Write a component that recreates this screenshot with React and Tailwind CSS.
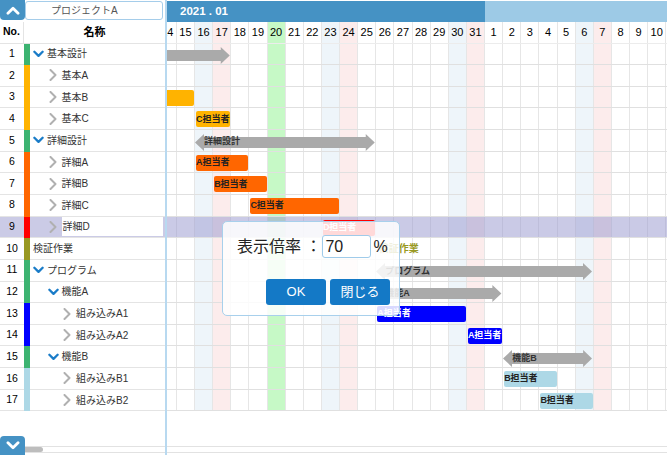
import React from "react";

const W = 18.125;
const days = [...Array(18)].map((_, i) => 14 + i).concat([...Array(10)].map((_, i) => i + 1));

const cellBg = (i) => {
  if (i === 6) return "bg-[#c6f9c6]";
  if (i % 7 === 2) return "bg-[#eef5fa]";
  if (i % 7 === 3) return "bg-[#fcecec]";
  return "";
};

const GREEN = "bg-[#3cb371]";
const YELLOW = "bg-[#ffb300]";
const ORANGE = "bg-[#ff6600]";
const BLUE = "bg-[#0000ff]";
const LIGHT = "bg-[#add8e6]";

const rows = [
  { no: 1, name: "基本設計", strip: GREEN, level: 0, open: true, arrow: { s: -6, e: 4 } },
  { no: 2, name: "基本A", strip: YELLOW, level: 1 },
  { no: 3, name: "基本B", strip: YELLOW, level: 1, bar: { s: -3, e: 2, color: YELLOW } },
  { no: 4, name: "基本C", strip: YELLOW, level: 1, bar: { s: 2, e: 4, color: YELLOW, label: "C担当者" } },
  { no: 5, name: "詳細設計", strip: GREEN, level: 0, open: true, arrow: { s: 2, e: 12, label: "詳細設計" } },
  { no: 6, name: "詳細A", strip: ORANGE, level: 1, bar: { s: 2, e: 5, color: ORANGE, label: "A担当者" } },
  { no: 7, name: "詳細B", strip: ORANGE, level: 1, bar: { s: 3, e: 6, color: ORANGE, label: "B担当者" } },
  { no: 8, name: "詳細C", strip: ORANGE, level: 1, bar: { s: 5, e: 10, color: ORANGE, label: "C担当者" } },
  { no: 9, name: "詳細D", strip: "bg-[#ff0000]", level: 1, selected: true, bar: { s: 9, e: 12, color: "bg-[#ff0000]", label: "D担当者", white: true } },
  { no: 10, name: "検証作業", strip: "bg-[#999922]", level: 0, leaf: true, milestone: { s: 12, label: "検証作業" } },
  { no: 11, name: "プログラム", strip: GREEN, level: 0, open: true, arrow: { s: 12, e: 24, label: "プログラム" } },
  { no: 12, name: "機能A", strip: GREEN, level: 1, open: true, arrow: { s: 12, e: 19, label: "機能A" } },
  { no: 13, name: "組み込みA1", strip: BLUE, level: 2, bar: { s: 12, e: 17, color: BLUE, label: "A担当者", white: true } },
  { no: 14, name: "組み込みA2", strip: BLUE, level: 2, bar: { s: 17, e: 19, color: BLUE, label: "A担当者", white: true } },
  { no: 15, name: "機能B", strip: GREEN, level: 1, open: true, arrow: { s: 19, e: 24, label: "機能B" } },
  { no: 16, name: "組み込みB1", strip: LIGHT, level: 2, bar: { s: 19, e: 22, color: LIGHT, label: "B担当者" } },
  { no: 17, name: "組み込みB2", strip: LIGHT, level: 2, bar: { s: 21, e: 24, color: LIGHT, label: "B担当者" } },
];

const ChevronDown = ({ className }) => (
  <svg viewBox="0 0 12 8" className={className} fill="none" stroke="currentColor" strokeWidth="2.5" strokeLinecap="round" strokeLinejoin="round">
    <polyline points="1.5,1.5 6,6 10.5,1.5" />
  </svg>
);

const ChevronRight = ({ className }) => (
  <svg viewBox="0 0 8 12" className={className} fill="none" stroke="currentColor" strokeWidth="2" strokeLinecap="round" strokeLinejoin="round">
    <polyline points="1.5,1 6.5,6 1.5,11" />
  </svg>
);

const Arrow = ({ s, e, label }) => {
  const w = (e - s) * W - 1.5;
  const pts = `0,8.5 9,0 9,3 ${w - 9},3 ${w - 9},0 ${w},8.5 ${w - 9},17 ${w - 9},14 9,14 9,17`;
  return (
    <div className="absolute top-[3.5px] h-[17px]" style={{ left: s * W, width: w }}>
      <svg width={w} height="17" className="absolute inset-0">
        <polygon points={pts} fill="#aaaaaa" />
      </svg>
      {label && (
        <span className="absolute left-[9px] top-0 h-[17px] flex items-center text-[9px] font-bold text-[#333] whitespace-nowrap">
          {label}
        </span>
      )}
    </div>
  );
};

const Bar = ({ s, e, color, label, white }) => (
  <div
    className={`absolute top-[3px] h-[16px] rounded-[2px] flex items-center whitespace-nowrap text-[9px] font-bold ${color} ${white ? "text-white" : "text-[#222]"}`}
    style={{ left: s * W + 1, width: (e - s) * W - 2 }}
  >
    {label}
  </div>
);

const TimelineRow = ({ r }) => (
  <div className="relative flex h-[21.65px] ml-[-8.25px] border-b border-[#e0e0e0]">
    {days.map((d, i) => (
      <div key={i} className={`w-[18.125px] shrink-0 h-full border-r border-[#e6e6e6] ${cellBg(i)}`} />
    ))}
    {r.selected && <div className="absolute inset-0 bg-[rgba(150,150,205,0.5)]" />}
    {r.arrow && <Arrow {...r.arrow} />}
    {r.bar && <Bar {...r.bar} />}
    {r.milestone && (
      <span
        className="absolute top-0 h-full flex items-center text-[10px] font-bold text-[#999922] whitespace-nowrap"
        style={{ left: r.milestone.s * W + 2.5 }}
      >
        {r.milestone.label}
      </span>
    )}
  </div>
);

const LeftRow = ({ r }) => {
  const pad = 3 + r.level * 14.5;
  return (
    <div className={`flex h-[21.65px] ${r.selected ? "bg-[#cbcbe6]" : ""}`}>
      <div className="w-[24px] shrink-0 flex items-center justify-center text-[10.5px] text-black border-b border-[#e4e4e4]">
        {r.no}
      </div>
      <div className={`w-[6px] shrink-0 ${r.strip}`} />
      <div className="flex-1 flex items-center border-b border-[#e4e4e4]" style={{ paddingLeft: pad }}>
        {!r.leaf && (
          <span className="w-[14px] shrink-0 flex items-center">
            {r.open ? (
              <ChevronDown className="w-[11px] h-[8px] text-[#1a7cc8]" />
            ) : (
              <ChevronRight className="w-[8px] h-[12px] text-[#b0b0b0] ml-[1px]" />
            )}
          </span>
        )}
        <span
          className={`text-[10px] text-[#333] whitespace-nowrap ${
            r.selected ? "bg-white flex-1 h-[19px] flex items-center mr-[2px] pl-[1px]" : ""
          }`}
        >
          {r.name}
        </span>
      </div>
    </div>
  );
};

export default function App() {
  return (
    <div className="relative w-[667px] h-[455px] overflow-hidden bg-white flex font-['Liberation_Sans','Noto_Sans_CJK_JP',sans-serif]">
      {/* left panel */}
      <div className="w-[167px] shrink-0 flex flex-col border-r-2 border-[#b8d9f0]">
        <div className="h-[22px] flex items-start">
          <button className="w-[25px] h-[20px] bg-[#4592c4] rounded-b-[4px] flex items-center justify-center">
            <ChevronDown className="w-[14px] h-[9px] text-white rotate-180" />
          </button>
          <div className="flex-1 h-[19px] mt-[1px] mr-[2px] border border-[#a5cdea] rounded-[3px] flex items-center pl-[25px] text-[10px] text-[#555]">
            プロジェクトA
          </div>
        </div>
        <div className="h-[21.5px] flex border-b border-[#e4e4e4]">
          <div className="w-[24px] flex items-center justify-center text-[10.5px] font-bold border-r border-[#e4e4e4]">No.</div>
          <div className="flex-1 flex items-center justify-center text-[11px] font-bold">名称</div>
        </div>
        {rows.map((r) => (
          <LeftRow key={r.no} r={r} />
        ))}
        <div className="flex-1" />
        <div className="h-[19px] flex items-end">
          <button className="w-[25px] h-[19px] bg-[#4592c4] rounded-t-[4px] flex items-center justify-center">
            <ChevronDown className="w-[14px] h-[9px] text-white" />
          </button>
          <div className="flex-1 h-[7px] mb-[2px] border-y border-[#e2e2e2] flex">
            <div className="w-[18px] h-full bg-[#bdbdbd] rounded-r-[3px]" />
          </div>
        </div>
      </div>

      {/* timeline */}
      <div className="flex-1 flex flex-col overflow-hidden">
        <div className="h-[22px] pt-px flex">
          <div className="w-[318px] shrink-0 bg-[#4592c4] text-white font-bold text-[11.5px] flex items-center pl-[13px]">
            2021 . 01
          </div>
          <div className="flex-1 bg-[#9dcae6]" />
        </div>
        <div className="flex h-[21.5px] ml-[-8.25px] border-b border-[#ececec]">
          {days.map((d, i) => (
            <div
              key={i}
              className={`w-[18.125px] shrink-0 h-full border-r border-[#e6e6e6] flex items-center justify-center text-[11px] text-black ${cellBg(i)}`}
            >
              {d}
            </div>
          ))}
        </div>
        {rows.map((r) => (
          <TimelineRow key={r.no} r={r} />
        ))}
        <div className="flex-1" />
        <div className="h-[7px] mb-[2px] border-y border-[#e2e2e2]" />
      </div>

      {/* zoom dialog */}
      <div className="absolute left-[222px] top-[221px] w-[178px] h-[95px] border border-[#a8d0ec] rounded-[5px] bg-white/85 z-10 pt-[13px] pl-[14px] pr-[9px]">
        <div className="flex items-center h-[23px]">
          <span className="text-[16px] text-[#222] whitespace-nowrap">表示倍率 ：</span>
          <div className="ml-[1px] w-[49px] h-[23px] border border-[#9fcbea] rounded-[3px] bg-white flex items-center pl-[2px] text-[16px] text-[#222]">
            70
          </div>
          <span className="ml-[2px] text-[16px] text-[#222]">%</span>
        </div>
        <div className="mt-[21px] flex justify-end gap-[4px]">
          <button className="w-[60px] h-[26px] bg-[#1479c6] rounded-[3px] text-white text-[13px] flex items-center justify-center">
            OK
          </button>
          <button className="w-[60px] h-[26px] bg-[#1479c6] rounded-[3px] text-white text-[13px] flex items-center justify-center">
            閉じる
          </button>
        </div>
      </div>
    </div>
  );
}
